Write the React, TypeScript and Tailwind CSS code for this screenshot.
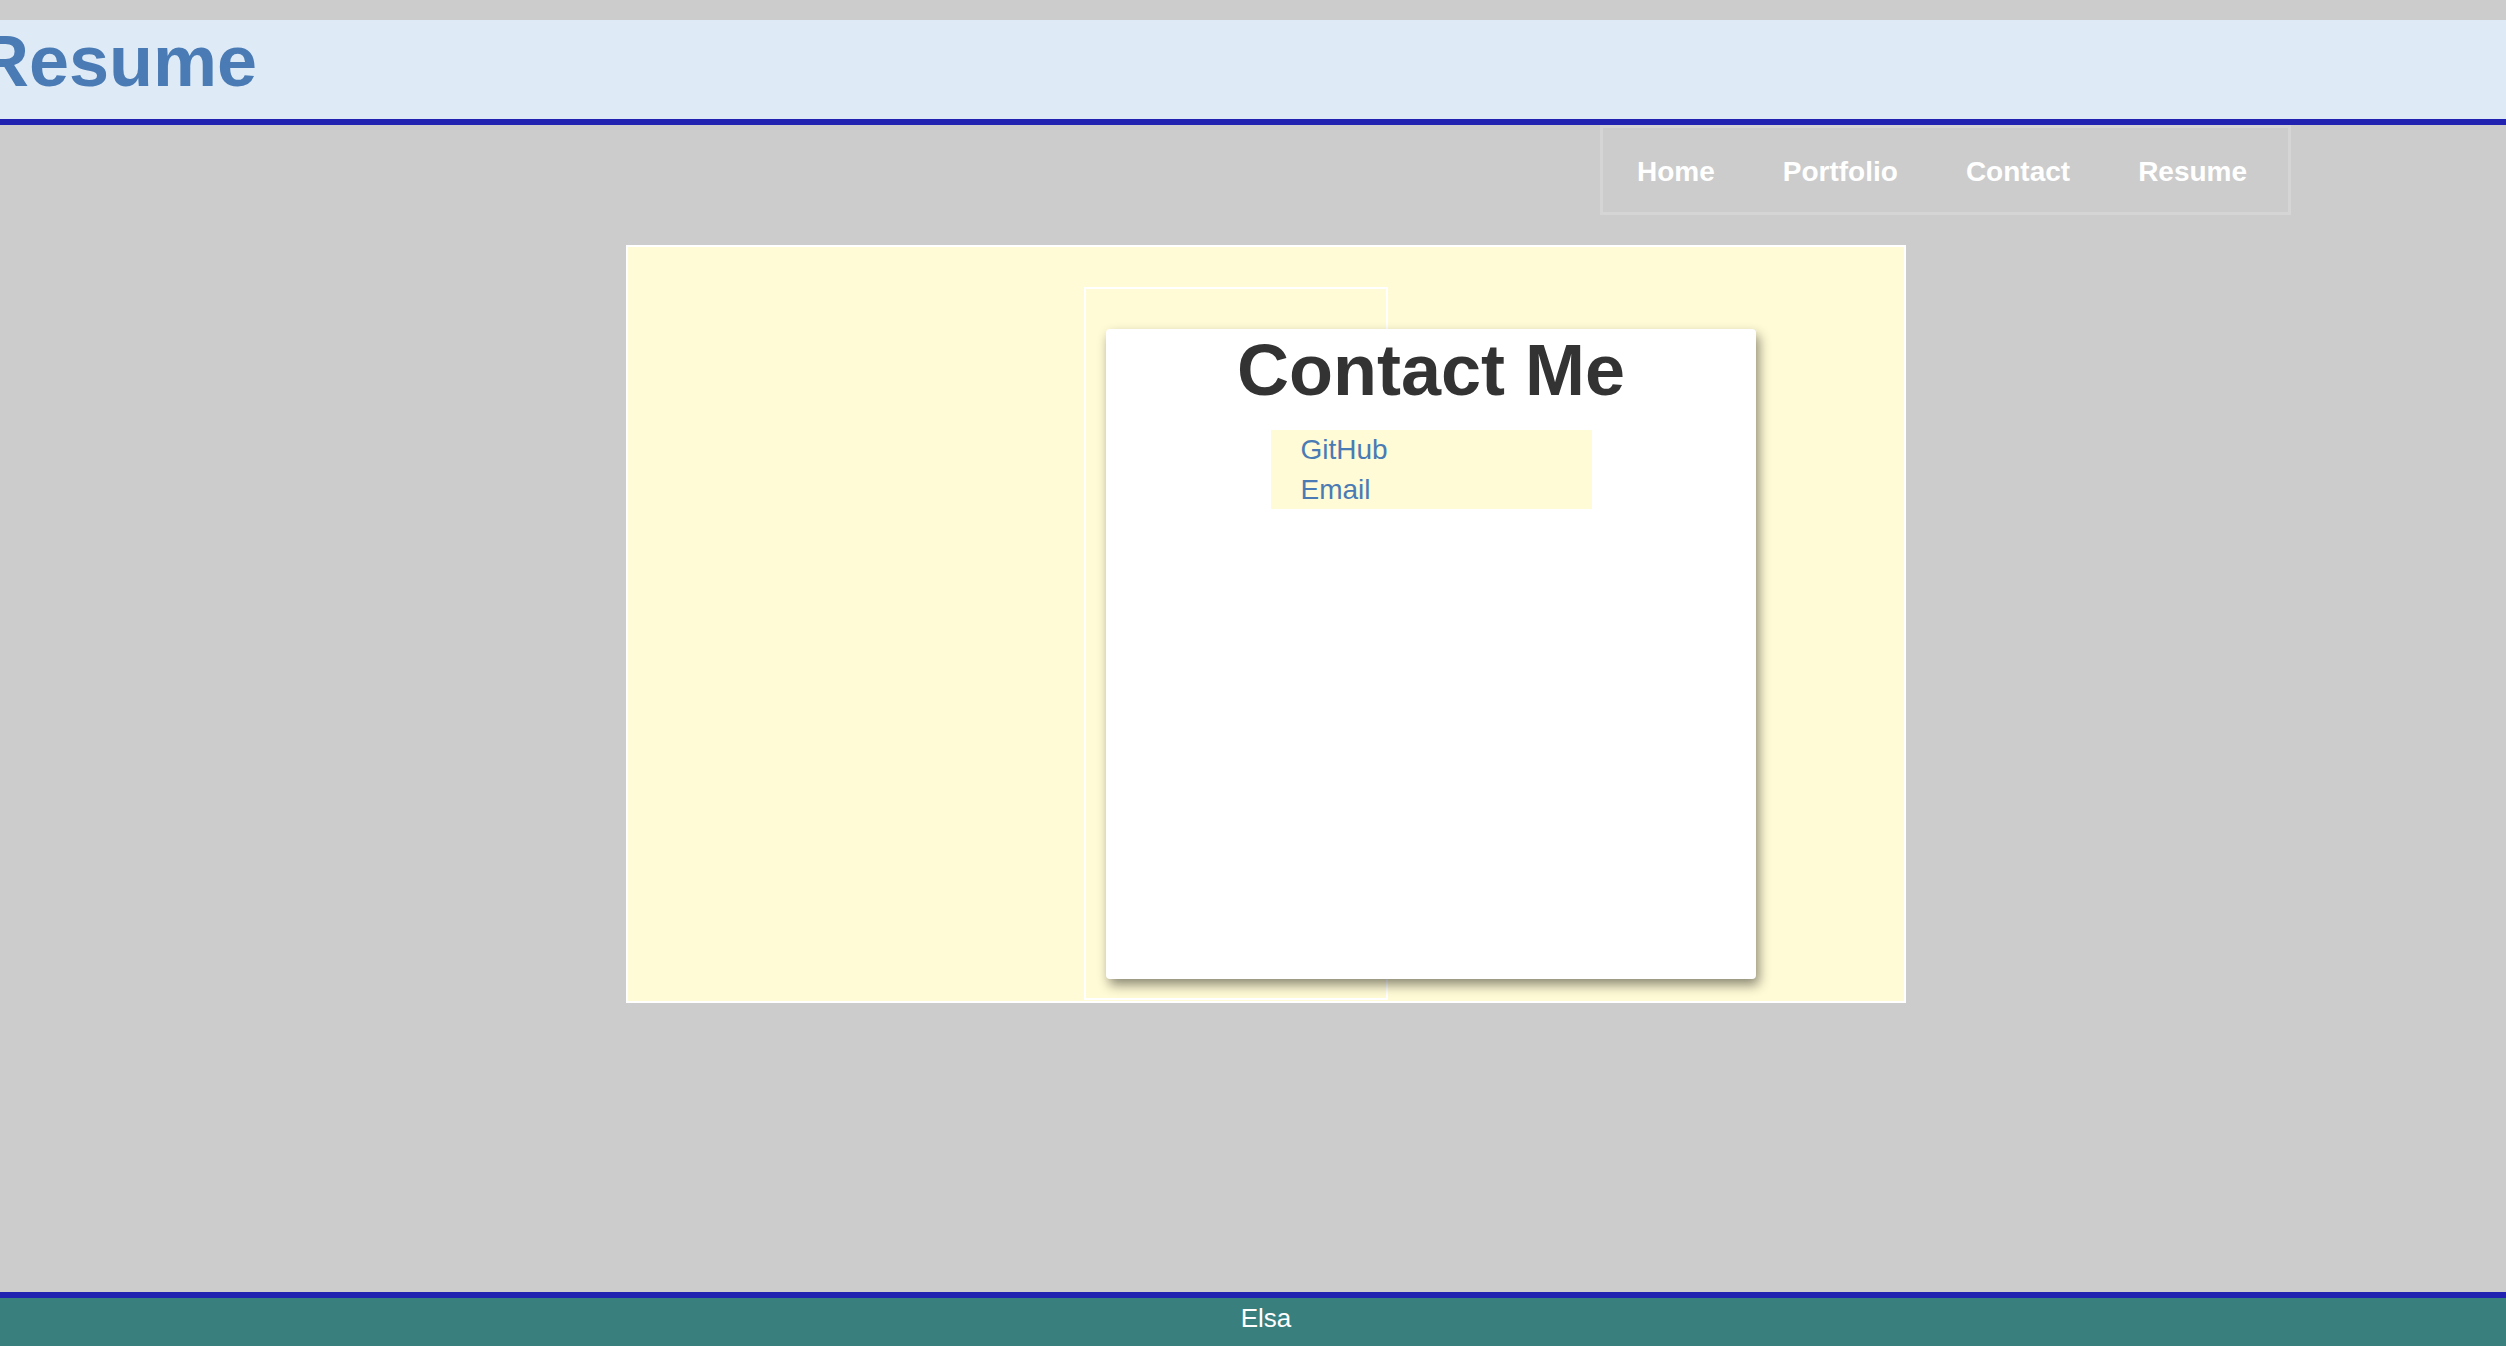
import React from "react";

export default function App() {
  const font = { fontFamily: '"Liberation Sans", Arial, Helvetica, sans-serif' };
  return (
    <div className="h-[1346px] w-full overflow-hidden bg-[#cccccc] flex flex-col" style={font}>
      <div className="h-[20px] shrink-0" />
      <header className="h-[105px] shrink-0 bg-[#deebf6] border-b-[6px] border-[#2222b0] overflow-hidden">
        <h1 className="ml-[-23px] text-[72px] font-bold leading-[83px] text-[#4a7bb5] whitespace-nowrap">
          Resume
        </h1>
      </header>
      <div className="flex justify-end mr-[215px] shrink-0">
        <nav className="w-[691px] h-[90px] border-[3px] border-[#d5d5d5] pt-[3px] flex items-center">
          {["Home", "Portfolio", "Contact", "Resume"].map((l) => (
            <a key={l} className="px-[34px] text-[28px] font-bold text-white leading-[32px]">
              {l}
            </a>
          ))}
        </nav>
      </div>
      <main className="mt-[30px] ml-[626px] w-[1280px] h-[758px] shrink-0 border-2 border-white bg-[#fffbd6]">
        <div className="ml-[456px] mt-[40px] w-[304px] h-[713px] border-2 border-white pl-[20px] pt-[40px]">
          <div className="w-[650px] h-[650px] bg-white rounded-[4px] shadow-[3px_6px_12px_rgba(0,0,0,0.45)]">
            <h2 className="text-center text-[72px] font-bold leading-[83px] text-[#333333]">Contact Me</h2>
            <ul className="mt-[18px] mx-auto w-[321px] bg-[#fffbd6] pl-[30px] text-[28px] leading-[39.5px] text-[#4a7bb5]">
              <li>GitHub</li>
              <li>Email</li>
            </ul>
          </div>
        </div>
      </main>
      <footer className="mt-auto h-[54px] shrink-0 border-t-[6px] border-[#2222b0] bg-[#387f7e] pl-[26px] pt-[5px] text-center text-[26px] leading-[30px] text-white">
        Elsa
      </footer>
    </div>
  );
}
